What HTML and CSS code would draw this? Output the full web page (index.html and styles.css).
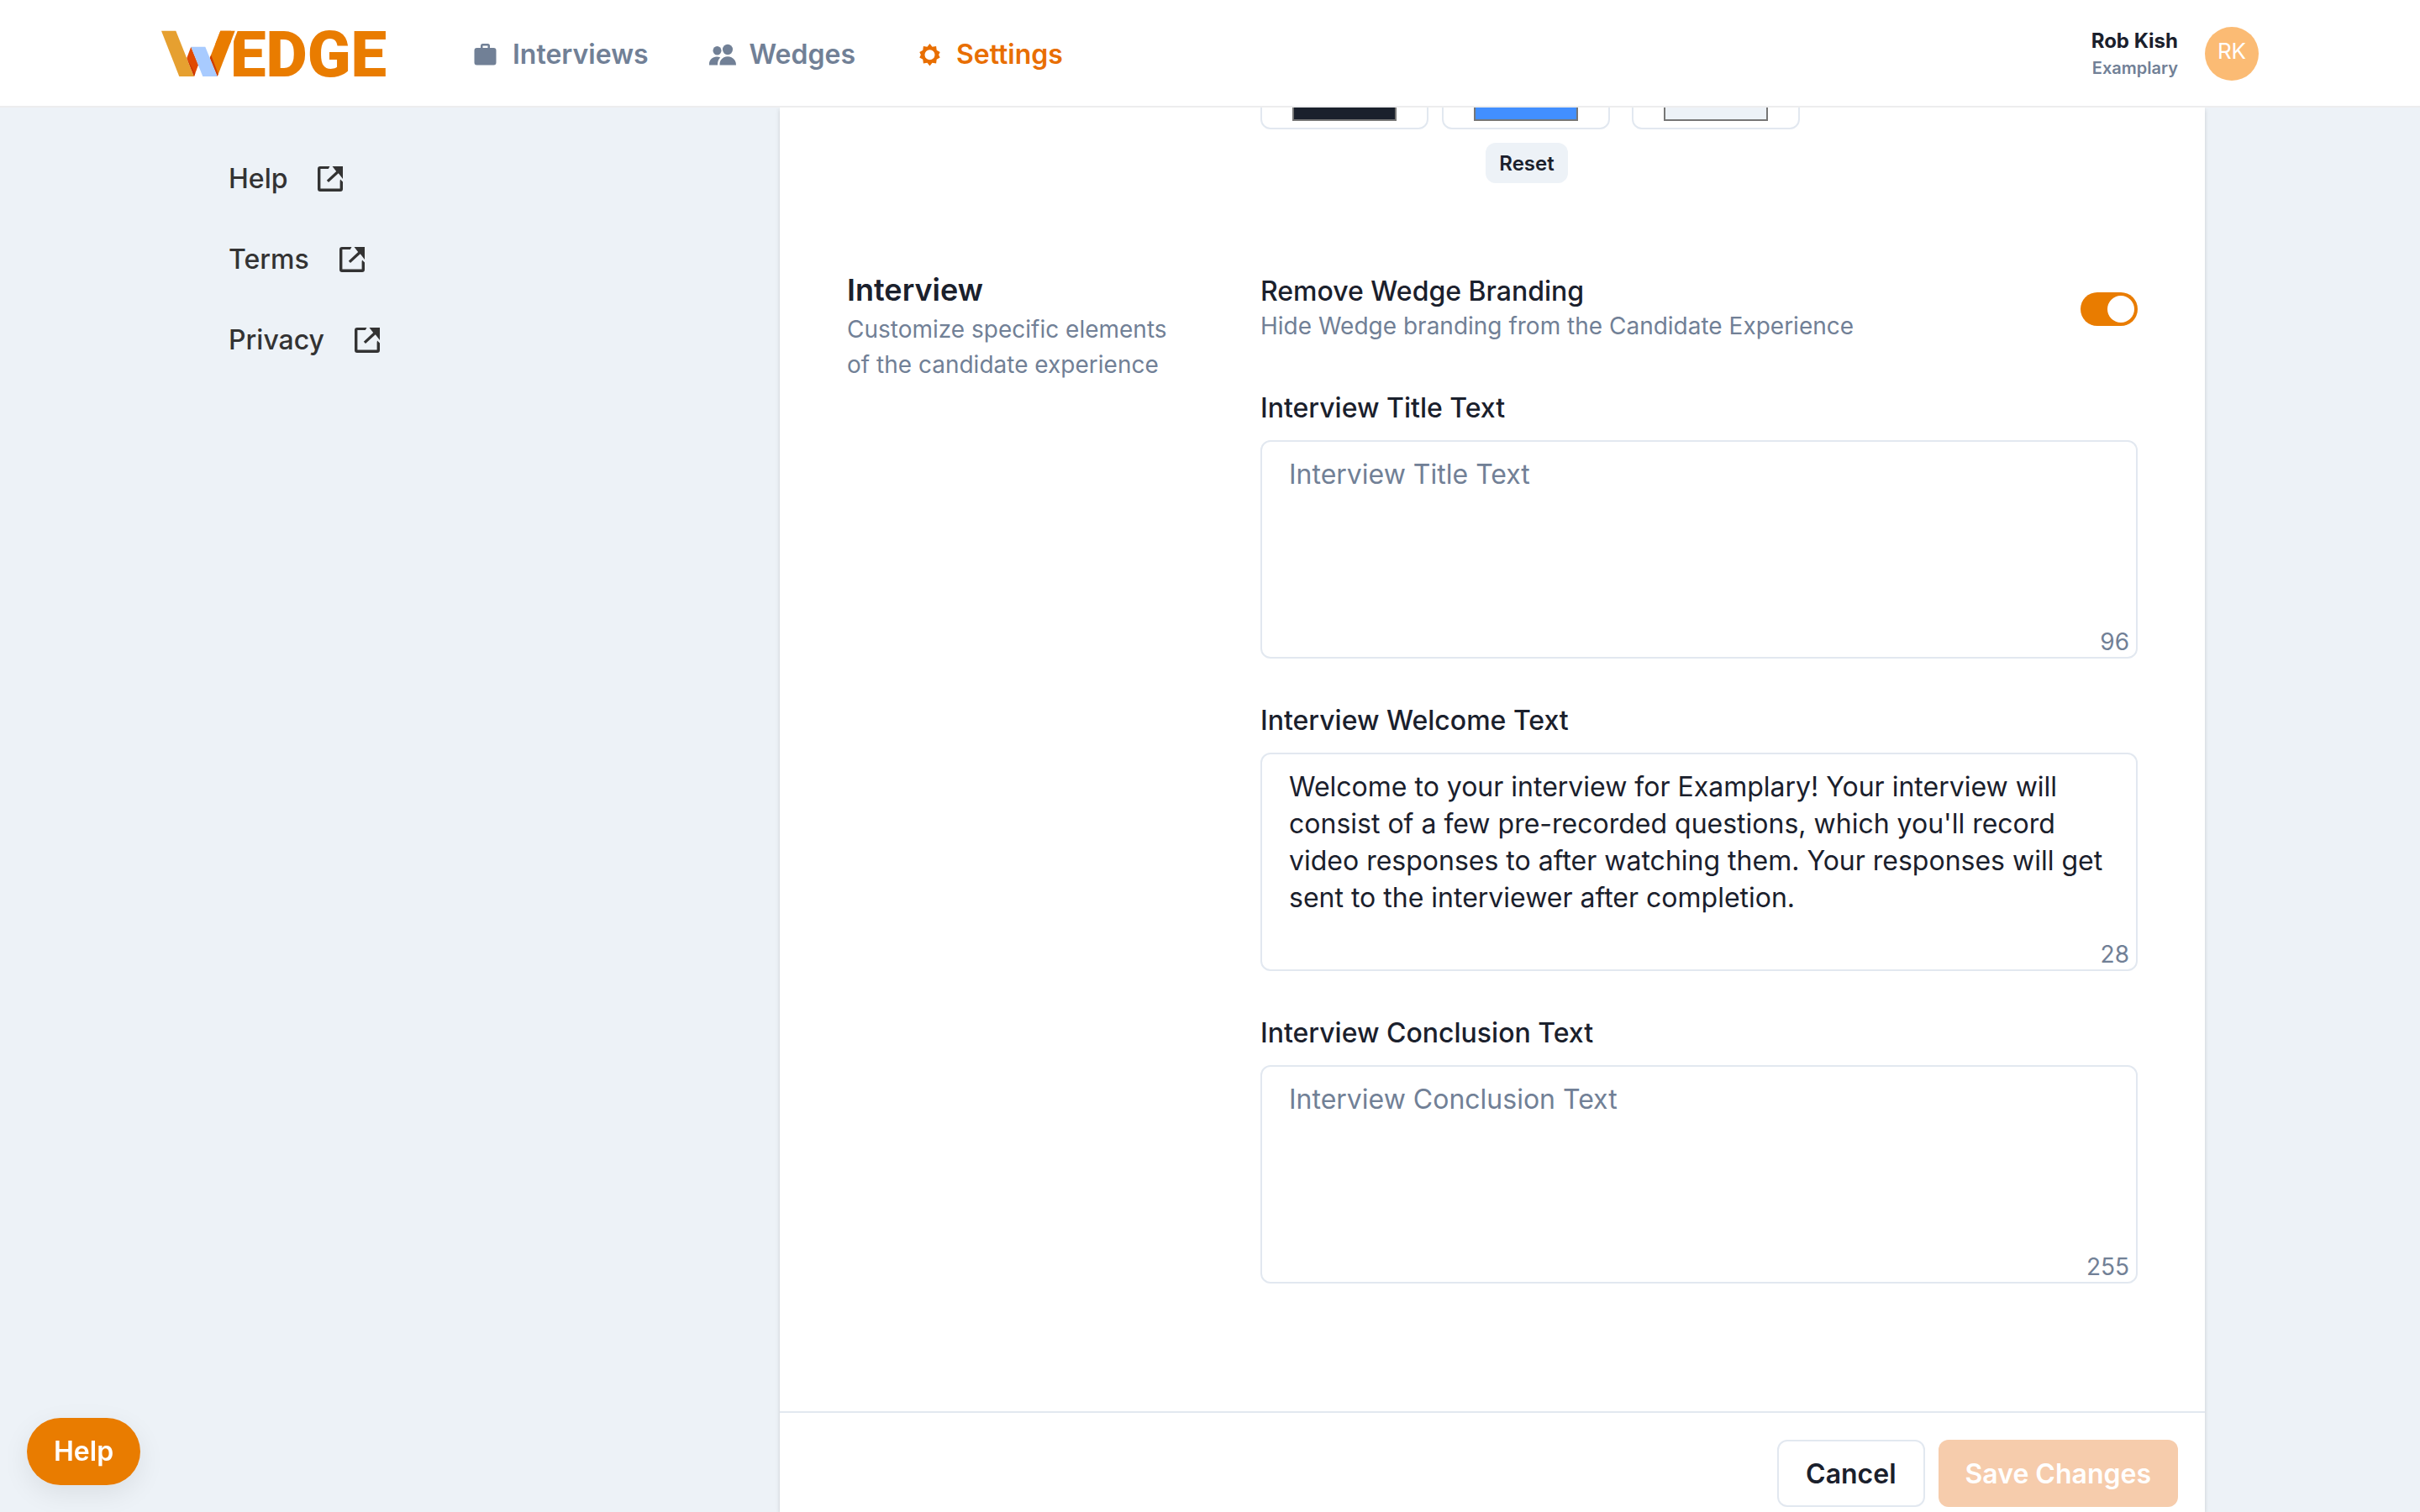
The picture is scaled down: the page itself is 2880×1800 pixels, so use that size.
FILE: index.html
```html
<!DOCTYPE html>
<html lang="en">
<head>
    <meta charset="UTF-8">
    <meta name="viewport" content="width=device-width, initial-scale=1.0">
    <title>Settings | Wedge</title>
    <link rel="stylesheet" href="styles.css">
</head>
<body>

    <!-- Shared icons -->
    <svg class="sprite" aria-hidden="true">
        <symbol id="icon-external" viewBox="0 0 30 30">
            <path d="M14.5 0l-1.700 3H3.400v23.600h23.200V17.500L27 15.500l3 3V27a3 3 0 0 1-3 3H3a3 3 0 0 1-3-3V3a3 3 0 0 1 3-3z" fill="currentColor"/>
            <path d="M17.500 0H30v15l-5.200-6.700L13 19l-2.200-2.200L22.200 6z" fill="currentColor"/>
        </symbol>
    </svg>

    <header class="header">
        <div class="container header-inner">
            <a href="#" class="logo" aria-label="Wedge">
                <svg width="272" height="96" viewBox="0 -20 272 96">
                    <path d="M0 .7h17.300L38.900 55H21.300z" fill="#e6a030"/>
                    <path d="M70.300 .7h17.400L66.700 55l-9-22z" fill="#e97c00"/>
                    <path d="M57.700 33l1.500-3.500 8.500 22.500-1 3z" fill="#cf3d00"/>
                    <path d="M35.300 19.700L30.300 33 39 55l5-13.700z" fill="#e04a00"/>
                    <path d="M30.300 33l8 15 2 3.500L39 55z" fill="#cc3700"/>
                    <path d="M35.300 19.700h17L66.700 55H49.300z" fill="#a8cbff"/>
                    <text class="logo-text" x="82" y="55">EDGE</text>
                    <path d="M83 0h8l-6.500 17H83z" fill="#fff"/>
                    <path d="M70.300 .7h17.400l-6 15.500H64.300z" fill="#e97c00"/>
                </svg>
            </a>

            <nav class="nav">
                <a href="#">
                    <svg class="icon" viewBox="0 0 32 32" fill="currentColor">
                        <path d="M6 8h4V5.500A2.500 2.500 0 0 1 12.500 3h6A2.500 2.500 0 0 1 21 5.500V8h4.500a3 3 0 0 1 3 3v14.500a3 3 0 0 1-3 3H5.500a3 3 0 0 1-3-3V11a3 3 0 0 1 3-3zM12.500 8h6V5.500h-6z" fill-rule="evenodd"/>
                    </svg>
                    Interviews
                </a>
                <a href="#">
                    <svg class="icon" viewBox="0 0 32 32" fill="currentColor">
                        <ellipse cx="9.500" cy="11.300" rx="5" ry="5.300"/>
                        <ellipse cx="22" cy="10" rx="6" ry="6.200"/>
                        <path d="M12.500 28.500c-.3-4 1.400-7.400 5-9.200a10 10 0 0 1 9 0c3.800 1.800 5.500 5.200 5.500 9.200z"/>
                        <path d="M0 28.500v-1.500c0-5 4-8.600 9-8.600 1.700 0 3.100.4 4.300 1.100-2.400 2.300-3.500 5.400-3.300 9z"/>
                    </svg>
                    Wedges
                </a>
                <a href="#" class="active">
                    <svg class="icon" viewBox="0 0 32 32" fill="currentColor">
                        <path fill-rule="evenodd" d="M16.500 3l3 3.700 4.600-.7.600 4.700 4 2.300-1.600 3.200 1.600 3.300-4 2.300-.6 4.700-4.600-.7-3 3.700-3-3.700-4.600.7-.6-4.700-4-2.300 1.600-3.300L4.300 13l4-2.300.6-4.700 4.600.7zM16.500 10.200a6 6 0 1 0 0 12 6 6 0 0 0 0-12z"/>
                    </svg>
                    Settings
                </a>
            </nav>

            <div class="user">
                <div class="user-info">
                    <span class="user-name">Rob Kish</span>
                    <span class="user-company">Examplary</span>
                </div>
                <div class="avatar">RK</div>
            </div>
        </div>
    </header>

    <div class="container layout">
        <aside class="sidebar">
            <a href="#">Help <svg><use href="#icon-external"/></svg></a>
            <a href="#">Terms <svg><use href="#icon-external"/></svg></a>
            <a href="#">Privacy <svg><use href="#icon-external"/></svg></a>
        </aside>

        <main class="card">
            <form class="settings">
                <!-- Brand colors -->
                <section class="row">
                    <div class="row-info"></div>
                    <div class="colors">
                        <div class="swatches">
                            <input type="color" value="#1a202c" aria-label="Text color">
                            <input type="color" value="#428fff" aria-label="Button color">
                            <input type="color" value="#edf2f7" aria-label="Background color">
                        </div>
                        <div class="reset">
                            <button type="button" class="btn-small">Reset</button>
                        </div>
                    </div>
                </section>

                <!-- Interview -->
                <section class="row interview">
                    <div class="row-info">
                        <h2>Interview</h2>
                        <p class="muted">Customize specific elements of the candidate experience</p>
                    </div>
                    <div class="row-fields">
                        <div class="switch-row">
                            <div>
                                <label for="branding">Remove Wedge Branding</label>
                                <p class="muted">Hide Wedge branding from the Candidate Experience</p>
                            </div>
                            <input type="checkbox" id="branding" class="switch" checked>
                        </div>

                        <div class="field">
                            <label for="titleText">Interview Title Text</label>
                            <div class="textarea-wrap">
                                <textarea id="titleText" placeholder="Interview Title Text"></textarea>
                                <span class="counter">96</span>
                            </div>
                        </div>

                        <div class="field">
                            <label for="welcomeText">Interview Welcome Text</label>
                            <div class="textarea-wrap">
                                <textarea id="welcomeText">Welcome to your interview for Examplary! Your interview will consist of a few pre-recorded questions, which you'll record video responses to after watching them. Your responses will get sent to the interviewer after completion.</textarea>
                                <span class="counter">28</span>
                            </div>
                        </div>

                        <div class="field">
                            <label for="conclusionText">Interview Conclusion Text</label>
                            <div class="textarea-wrap">
                                <textarea id="conclusionText" placeholder="Interview Conclusion Text"></textarea>
                                <span class="counter">255</span>
                            </div>
                        </div>
                    </div>
                </section>

                <div class="actions">
                    <button type="button" class="btn btn-outline">Cancel</button>
                    <button type="submit" class="btn btn-primary" disabled>Save Changes</button>
                </div>
            </form>
        </main>
    </div>

    <button type="button" class="help-button">Help</button>

</body>
</html>
```
FILE: styles.css
```css
* {
    box-sizing: border-box;
}

body {
    margin: 0;
    min-height: 100vh;
    display: flex;
    flex-direction: column;
    background-color: #edf2f7;
    color: #1a202c;
    font-family: Inter, "Liberation Sans", sans-serif;
    font-size: 32px;
    line-height: 48px;
}

h2, p {
    margin: 0;
}

a {
    color: inherit;
    text-decoration: none;
}

button, input, textarea {
    font-family: inherit;
}

.sprite {
    display: none;
}

.container {
    width: 100%;
    max-width: 2560px;
    margin: 0 auto;
    padding: 0 32px;
}

/* Header */
.header {
    position: sticky;
    top: 0;
    z-index: 10;
    background-color: #fff;
    box-shadow: inset 0 -2px #ededee;
}

.header-inner {
    display: flex;
    align-items: center;
    height: 128px;
}

.logo svg {
    display: block;
}

.logo-text {
    font-family: Roboto, sans-serif;
    font-size: 76px;
    font-weight: 900;
    fill: #e97c00;
}

.nav {
    display: flex;
    gap: 72px;
    margin-left: 98px;
    padding-top: 2px;
    font-weight: 600;
    color: #718096;
}

.nav a {
    display: flex;
    align-items: center;
    gap: 16px;
}

.nav .active {
    color: #e86e00;
}

.icon {
    width: 32px;
    height: 32px;
}

.user {
    display: flex;
    align-items: center;
    gap: 32px;
    margin-left: auto;
}

.user-info {
    display: flex;
    flex-direction: column;
    padding-top: 2px;
    text-align: right;
    line-height: 32px;
}

.user-name {
    font-size: 24px;
    font-weight: 700;
}

.user-company {
    font-size: 20px;
    font-weight: 600;
    color: #718096;
}

.avatar {
    width: 64px;
    height: 64px;
    border-radius: 50%;
    background-color: #fbbb74;
    color: #fff;
    font-size: 26px;
    line-height: 58px;
    text-align: center;
}

/* Page layout */
.layout {
    flex: 1;
    display: flex;
}

.sidebar {
    display: flex;
    flex-direction: column;
    gap: 48px;
    flex: 0 0 736px;
    padding: 61px 80px;
    font-weight: 500;
    color: #333;
}

.sidebar a {
    display: flex;
    align-items: center;
    gap: 36px;
}

.sidebar svg {
    width: 30px;
    height: 30px;
}

.card {
    flex: 1;
    margin-right: 64px;
    background-color: #fff;
    box-shadow: 0 2px 6px rgba(0, 0, 0, 0.1), 0 2px 4px rgba(0, 0, 0, 0.06);
}

.row {
    display: flex;
    gap: 96px;
    padding: 0 80px;
}

.row-info {
    flex: 0 0 396px;
}

.row-fields {
    flex: 1;
    padding-top: 6px;
}

.interview {
    padding-top: 103px;
    padding-bottom: 152px;
}

h2 {
    font-size: 36px;
    font-weight: 600;
    margin-bottom: 2px;
}

.muted {
    color: #718096;
    font-size: 28px;
    line-height: 42px;
}

.swatches {
    display: grid;
    grid-template-columns: 200px 210px 200px;
    gap: 16px;
    align-content: end;
    height: 26px;
    overflow: hidden;
}

.swatches input {
    width: 200px;
    height: 80px;
    padding: 8px 36px;
    border: 2px solid #e2e8f0;
    border-radius: 12px;
    background-color: #fff;
}

.swatches input::-webkit-color-swatch-wrapper {
    padding: 0;
}

.swatches input::-webkit-color-swatch {
    border: 2px solid #767676;
    border-radius: 0;
}

.reset {
    display: flex;
    justify-content: center;
    padding: 16px 0 0 216px;
    width: 418px;
}

.btn-small {
    height: 48px;
    padding: 0 16px;
    border: none;
    border-radius: 12px;
    background-color: #edf2f7;
    color: #1a202c;
    font-size: 24px;
    font-weight: 600;
}

/* Interview fields */
.switch-row {
    display: flex;
    align-items: center;
    justify-content: space-between;
    margin-bottom: 51px;
}

.switch-row label {
    display: block;
    font-weight: 500;
    line-height: 40px;
}

.switch {
    appearance: none;
    width: 68px;
    height: 40px;
    margin: 0;
    padding: 4px;
    border-radius: 20px;
    background-color: #cbd5e0;
}

.switch::before {
    content: "";
    display: block;
    width: 32px;
    height: 32px;
    border-radius: 50%;
    background-color: #fff;
}

.switch:checked {
    background-color: #e97c00;
}

.switch:checked::before {
    margin-left: auto;
}

.field + .field {
    margin-top: 48px;
}

.field label {
    display: block;
    padding-top: 2px;
    margin-bottom: 14px;
    font-weight: 500;
}

.textarea-wrap {
    position: relative;
}

textarea {
    display: block;
    width: 100%;
    height: 260px;
    padding: 17px 32px;
    border: 2px solid #e2e8f0;
    border-radius: 12px;
    background-color: #fff;
    color: #1a202c;
    font-size: 32px;
    line-height: 44px;
    resize: none;
}

textarea::placeholder {
    color: #718096;
}

.counter {
    position: absolute;
    right: 10px;
    bottom: 0;
    color: #718096;
    font-size: 28px;
    line-height: 40px;
}

/* Footer actions */
.actions {
    display: flex;
    justify-content: flex-end;
    gap: 16px;
    padding: 32px 32px 6px;
    border-top: 2px solid #e2e8f0;
}

.btn {
    height: 80px;
    padding: 0 32px;
    border: none;
    border-radius: 12px;
    font-size: 32px;
    font-weight: 600;
}

.btn-outline {
    border: 2px solid #e2e8f0;
    background-color: #fff;
    color: #1a202c;
}

.btn-primary {
    background-color: #e97c00;
    color: #fff;
}

.btn-primary:disabled {
    background-color: #f6ccac;
}

.help-button {
    position: fixed;
    left: 32px;
    bottom: 32px;
    z-index: 20;
    height: 80px;
    padding: 0 32px 2px;
    border: none;
    border-radius: 40px;
    background-color: #e97c00;
    color: #fff;
    font-size: 32px;
    font-weight: 600;
    box-shadow: 0 10px 32px rgba(0, 0, 0, 0.08);
}
```
